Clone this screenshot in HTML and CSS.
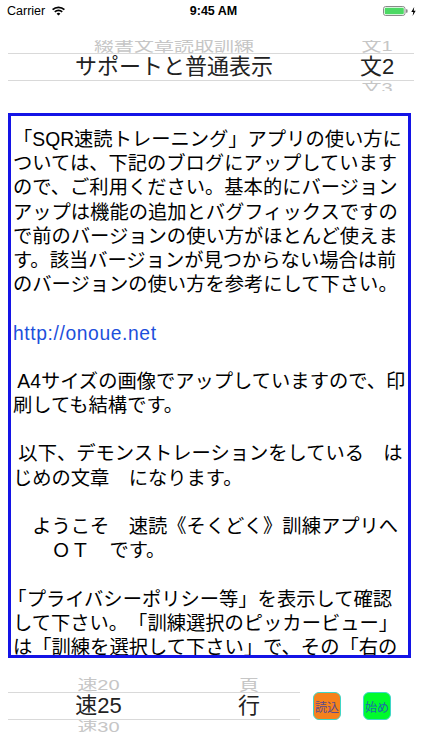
FILE: index.html
```html
<!DOCTYPE html>
<html lang="ja">
<head>
<meta charset="utf-8">
<title>SQR速読トレーニング</title>
<link rel="stylesheet" href="styles.css">
</head>
<body>
<div class="status">
  <div class="carrier">
    <span>Carrier</span>
    <svg class="wifi" width="13" height="10" viewBox="0 0 13 10">
      <path d="M0.6 3.7 A8.4 8.4 0 0 1 12.4 3.7" fill="none" stroke="#000" stroke-width="1.7"/>
      <path d="M2.8 5.9 A5.3 5.3 0 0 1 10.2 5.9" fill="none" stroke="#000" stroke-width="1.7"/>
      <path d="M6.5 9.6 L4.6 7.7 A2.7 2.7 0 0 1 8.4 7.7 Z" fill="#000"/>
    </svg>
  </div>
  <div class="time">9:45 AM</div>
  <div class="battery">
    <svg width="26" height="10" viewBox="0 0 26 10">
      <rect x="0.5" y="0.5" width="21.5" height="9" rx="2.2" fill="none" stroke="#8a8a8a" stroke-width="1"/>
      <rect x="1.7" y="1.7" width="19.1" height="6.6" rx="1.2" fill="#4cd964"/>
      <path d="M23 3.3 h0.8 a0.8 0.8 0 0 1 0.8 0.8 v1.8 a0.8 0.8 0 0 1 -0.8 0.8 h-0.8 Z" fill="#8a8a8a"/>
    </svg>
    <svg width="5" height="9" viewBox="0 0 5 9">
      <path d="M3.2 0 L0.3 5 H2.3 L1.6 9 L4.7 3.8 H2.7 Z" fill="#000"/>
    </svg>
  </div>
</div>

<div class="picker picker-top">
  <div class="prow prev"><span class="c1"><span class="fade">綴書文章読取訓練</span></span><span class="c2"><span class="fade">文1</span></span></div>
  <div class="prow sel"><span class="c1">サポートと普通表示</span><span class="c2">文2</span></div>
  <div class="prow next"><span class="c1"></span><span class="c2"><span class="fade">文3</span></span></div>
</div>

<div class="textbox">
  <div class="ln">「SQR速読トレーニング」アプリの使い方に</div>
  <div class="ln">ついては、下記のブログにアップしています</div>
  <div class="ln">ので、ご利用ください。基本的にバージョン</div>
  <div class="ln">アップは機能の追加とバグフィックスですの</div>
  <div class="ln">で前のバージョンの使い方がほとんど使えま</div>
  <div class="ln">す。該当バージョンが見つからない場合は前</div>
  <div class="ln">のバージョンの使い方を参考にして下さい。</div>
  <div class="ln"> </div>
  <div class="ln link">http://onoue.net</div>
  <div class="ln"> </div>
  <div class="ln"> A4サイズの画像でアップしていますので、印</div>
  <div class="ln">刷しても結構です。</div>
  <div class="ln"> </div>
  <div class="ln"> 以下、デモンストレーションをしている　は</div>
  <div class="ln">じめの文章　になります。</div>
  <div class="ln"> </div>
  <div class="ln">　ようこそ　速読《そくどく》訓練アプリへ</div>
  <div class="ln">　　ＯＴ　です。</div>
  <div class="ln"> </div>
  <div class="ln trim">「プライバシーポリシー等」を表示して確認</div>
  <div class="ln">して下さい。「訓練選択のピッカービュー」</div>
  <div class="ln">は「訓練を選択して下さい」で、その「右の</div>
</div>

<div class="bottom">
  <div class="picker picker-bottom">
    <div class="prow prev"><span class="c1"><span class="fade">速20</span></span><span class="c2"><span class="fade">頁</span></span></div>
    <div class="prow sel"><span class="c1">速25</span><span class="c2">行</span></div>
    <div class="prow next"><span class="c1"><span class="fade">速30</span></span><span class="c2"></span></div>
  </div>
  <div class="btn btn-load">読込</div>
  <div class="btn btn-start">始め</div>
</div>
</body>
</html>
```

FILE: styles.css
```css
html, body {
  margin: 0;
  padding: 0;
  background: #ffffff;
}

body {
  width: 422px;
  height: 750px;
  overflow: hidden;
  font-family: "Liberation Sans", "Noto Sans CJK JP", sans-serif;
  color: #000;
}

/* status bar */
.status {
  display: grid;
  grid-template-columns: 1fr auto 1fr;
  align-items: center;
  height: 22px;
  padding: 0 6px 0 7px;
  font-size: 12.5px;
}

.carrier {
  display: flex;
  align-items: center;
  gap: 7px;
}

.time {
  font-weight: bold;
  padding-left: 4px;
}

.battery {
  justify-self: end;
  display: flex;
  align-items: center;
  gap: 2px;
}

/* pickers */
.picker {
  display: flex;
  flex-direction: column;
}

.picker-top {
  margin: 18px 8px 0 8px;
}

.prow {
  display: flex;
  overflow: hidden;
}

.prow .c1,
.prow .c2 {
  display: flex;
  justify-content: center;
  white-space: nowrap;
}

.prev {
  align-items: flex-end;
}

.prev .c1,
.prev .c2 {
  align-self: flex-end;
}

.next {
  align-items: flex-start;
}

.fade {
  display: block;
  color: #c6c6c6;
  font-size: 20px;
  line-height: 20px;
}

.prev .fade {
  transform: scaleY(0.72);
  transform-origin: 50% 100%;
}

.next .fade {
  transform: scaleY(0.72);
  transform-origin: 50% 0%;
}

.sel {
  align-items: center;
  border-top: 1px solid #d9d9d9;
  border-bottom: 1px solid #d9d9d9;
  font-size: 22px;
  line-height: 26px;
  color: #222;
}

.picker-top .prev { height: 13px; }
.picker-top .sel { height: 26px; }
.picker-top .next { height: 10px; }

.picker-top .c1 { width: 332px; }
.picker-top .c2 { flex: 1; }

/* text box: border drawn over the text like a layer border */
.textbox {
  box-sizing: border-box;
  margin: 22px 11px 0 8px;
  height: 545px;
  outline: 3px solid #1414e6;
  outline-offset: -3px;
  padding: 15px 0 0 5px;
  overflow: hidden;
  font-size: 19.3px;
  line-height: 24.2px;
  text-spacing-trim: space-all;
}

.ln {
  white-space: pre;
  height: 24.2px;
}

.trim {
  text-spacing-trim: trim-start;
  padding-left: 4px;
}

.link {
  color: #1d4fdc;
  letter-spacing: 0.6px;
}

/* bottom area */
.bottom {
  display: flex;
  align-items: center;
  margin: 19px 0 0 8px;
}

.picker-bottom {
  width: 292px;
}

.picker-bottom .prev { height: 15px; }
.picker-bottom .sel { height: 26px; }
.picker-bottom .next { height: 12px; }

.picker-bottom .c1 { width: 181px; }
.picker-bottom .c2 { width: 111px; padding-left: 9px; box-sizing: border-box; }

.btn {
  box-sizing: border-box;
  width: 28px;
  height: 28px;
  border: 1.5px solid #3fd6c8;
  border-radius: 6px;
  display: flex;
  align-items: center;
  justify-content: center;
  font-size: 12px;
  margin-top: 3px;
}

.btn-load {
  margin-left: 13px;
  background: #f6821c;
  color: #5a4a8c;
}

.btn-start {
  margin-left: 22px;
  background: #00fb2c;
  color: #1f6aa8;
}
```
